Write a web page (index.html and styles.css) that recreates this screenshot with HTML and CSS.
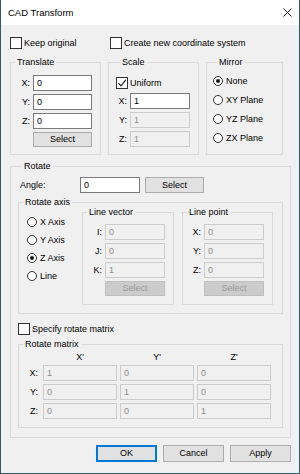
FILE: index.html
```html
<!DOCTYPE html>
<html>
<head>
<meta charset="utf-8">
<title>CAD Transform</title>
<link rel="stylesheet" href="styles.css">
</head>
<body>
<div class="window">
  <div class="titlebar">
    <span class="title">CAD Transform</span>
    <svg class="close" width="9" height="9" viewBox="0 0 9 9"><path d="M0.5 0.5L8.5 8.5M8.5 0.5L0.5 8.5" stroke="#1a1a1a" stroke-width="1" fill="none"/></svg>
  </div>
  <div class="dialog">
    <div class="checks">
      <label class="check keep"><span class="cb"></span>Keep original</label>
      <label class="check"><span class="cb"></span>Create new coordinate system</label>
    </div>

    <div class="toprow">
      <div class="group translate">
        <div class="gtitle">Translate</div>
        <div class="fields f59">
          <span class="flabel">X:</span><span class="input">0</span>
          <span class="flabel">Y:</span><span class="input">0</span>
          <span class="flabel">Z:</span><span class="input">0</span>
          <span></span><span class="btn">Select</span>
        </div>
      </div>

      <div class="group scale">
        <div class="gtitle">Scale</div>
        <label class="check uniform"><span class="cb"><svg width="10" height="10" viewBox="0 0 10 10"><path d="M1.5 5.2L4 7.8L8.8 1.8" stroke="#222" stroke-width="1.2" fill="none"/></svg></span>Uniform</label>
        <div class="fields f60 scalefields">
          <span class="flabel">X:</span><span class="input">1</span>
          <span class="flabel dl">Y:</span><span class="input dis">1</span>
          <span class="flabel dl">Z:</span><span class="input dis">1</span>
        </div>
      </div>

      <div class="group mirror">
        <div class="gtitle">Mirror</div>
        <div class="radios">
          <label class="radio"><span class="rb on"></span>None</label>
          <label class="radio"><span class="rb"></span>XY Plane</label>
          <label class="radio"><span class="rb"></span>YZ Plane</label>
          <label class="radio"><span class="rb"></span>ZX Plane</label>
        </div>
      </div>
    </div>

    <div class="group rotate">
      <div class="gtitle">Rotate</div>
      <div class="angle">
        <span class="anglelabel">Angle:</span>
        <span class="input angleinput">0</span>
        <span class="btn anglebtn">Select</span>
      </div>

      <div class="group axis">
        <div class="gtitle">Rotate axis</div>
        <div class="axisbody">
          <div class="radios axisradios">
            <label class="radio"><span class="rb"></span>X Axis</label>
            <label class="radio"><span class="rb"></span>Y Axis</label>
            <label class="radio"><span class="rb on"></span>Z Axis</label>
            <label class="radio"><span class="rb"></span>Line</label>
          </div>
          <div class="group sub linevector">
            <div class="gtitle">Line vector</div>
            <div class="fields f60 subfields">
              <span class="flabel">I:</span><span class="input dis">0</span>
              <span class="flabel">J:</span><span class="input dis">0</span>
              <span class="flabel">K:</span><span class="input dis">1</span>
              <span></span><span class="btn dis">Select</span>
            </div>
          </div>
          <div class="group sub linepoint">
            <div class="gtitle">Line point</div>
            <div class="fields f60 subfields">
              <span class="flabel">X:</span><span class="input dis">0</span>
              <span class="flabel">Y:</span><span class="input dis">0</span>
              <span class="flabel">Z:</span><span class="input dis">0</span>
              <span></span><span class="btn dis">Select</span>
            </div>
          </div>
        </div>
      </div>

      <label class="check specify"><span class="cb"></span>Specify rotate matrix</label>

      <div class="group matrix">
        <div class="gtitle">Rotate matrix</div>
        <div class="mgrid">
          <span></span><span class="mhead">X'</span><span class="mhead">Y'</span><span class="mhead">Z'</span>
          <span class="flabel">X:</span><span class="input dis">1</span><span class="input dis">0</span><span class="input dis">0</span>
          <span class="flabel">Y:</span><span class="input dis">0</span><span class="input dis">1</span><span class="input dis">0</span>
          <span class="flabel">Z:</span><span class="input dis">0</span><span class="input dis">0</span><span class="input dis">1</span>
        </div>
      </div>
    </div>

    <div class="buttons">
      <span class="btn dlg default">OK</span>
      <span class="btn dlg">Cancel</span>
      <span class="btn dlg">Apply</span>
    </div>
  </div>
</div>
</body>
</html>
```

FILE: styles.css
```css
* {
  box-sizing: border-box;
}

body {
  margin: 0;
  font-family: "Liberation Sans", Arial, sans-serif;
  font-size: 9px;
  color: #000;
  background: #f0f0f0;
}

.window {
  width: 300px;
  height: 474px;
  border: 1px solid #2f5a68;
  border-top: none;
  display: flex;
  flex-direction: column;
  background: #f0f0f0;
}

.titlebar {
  height: 25px;
  flex: none;
  background: #fff;
  display: flex;
  align-items: center;
  justify-content: space-between;
  padding: 0 7px 0 7px;
}

.title {
  font-size: 9.5px;
  color: #000;
}

.close {
  display: block;
}

.dialog {
  flex: 1;
  padding: 12px 8px 0 9px;
}

/* checkboxes */
.checks {
  display: flex;
  height: 12px;
}

.check {
  display: flex;
  align-items: center;
  gap: 2px;
  height: 12px;
  line-height: 12px;
  white-space: nowrap;
}

.keep {
  width: 100px;
}

.cb {
  width: 12px;
  height: 12px;
  flex: none;
  border: 1px solid #333;
  background: #fff;
  display: flex;
  align-items: center;
  justify-content: center;
}

.cb svg {
  display: block;
}

/* group boxes */
.group {
  border: 1px solid #d9d9d9;
}

.gtitle {
  margin: -6px 0 0 4px;
  padding: 0 2px;
  width: max-content;
  height: 11px;
  line-height: 11px;
  background: #f0f0f0;
}

.toprow {
  display: flex;
  gap: 7px;
  margin-top: 13px;
}

.translate {
  width: 91px;
  padding: 0 8px 7px 0;
}

.scale {
  width: 91px;
  padding: 0 8px 7px 7px;
}

.mirror {
  width: 77px;
  padding: 0 4px 0 6px;
}

.fields {
  display: grid;
  row-gap: 3px;
  margin-top: 7px;
}

.f59 {
  grid-template-columns: 1fr 59px;
}

.f60 {
  grid-template-columns: 1fr 60px;
}

.scalefields {
  margin-top: 4px;
}

.uniform {
  margin-top: 9px;
}

.flabel {
  text-align: right;
  padding-right: 3px;
  height: 16px;
  line-height: 16px;
}

.input {
  height: 16px;
  border: 1px solid #7a7a7a;
  background: #fff;
  padding-left: 3px;
  line-height: 14px;
  white-space: nowrap;
  overflow: hidden;
}

.input.dis {
  background: #f0f0f0;
  border-color: #cccccc;
  color: #8c8c8c;
}

.btn {
  height: 15px;
  border: 1px solid #adadad;
  background: #e1e1e1;
  text-align: center;
  line-height: 13px;
}

.btn.dis {
  background: #cccccc;
  border-color: #bfbfbf;
  color: #9a9a9a;
}

/* radios */
.radios {
  display: flex;
  flex-direction: column;
  gap: 9px;
  margin-top: 8px;
}

.radio {
  display: flex;
  align-items: center;
  gap: 3px;
  height: 10px;
  line-height: 10px;
  white-space: nowrap;
}

.rb {
  width: 10px;
  height: 10px;
  flex: none;
  border: 1px solid #333;
  border-radius: 50%;
  background: #fff;
  display: flex;
  align-items: center;
  justify-content: center;
}

.rb.on::after {
  content: "";
  width: 4px;
  height: 4px;
  border-radius: 50%;
  background: #1a1a1a;
}

/* rotate */
.rotate {
  margin-top: 11px;
  padding: 0 7px 9px 7px;
}

.angle {
  display: flex;
  align-items: center;
  margin-top: 5px;
  height: 16px;
}

.anglelabel {
  width: 62px;
  padding-left: 2px;
}

.angleinput {
  width: 60px;
}

.anglebtn {
  width: 59px;
  height: 16px;
  line-height: 14px;
  margin-left: 5px;
}

.axis {
  margin-top: 9px;
  padding: 0 0 8px 0;
}

.axisbody {
  display: flex;
  align-items: flex-start;
  margin-top: 4px;
}

.axisradios {
  width: 63px;
  padding-left: 8px;
  margin-top: 5px;
  gap: 8px;
}

.sub {
  padding: 0 8px 8px 0;
}

.linevector {
  width: 92px;
}

.linepoint {
  width: 91px;
  margin-left: 8px;
}

.subfields {
  margin-top: 6px;
}

.specify {
  margin-top: 9px;
}

.matrix {
  margin-top: 9px;
  padding: 0 11px 8px 0;
}

.mgrid {
  display: grid;
  grid-template-columns: 21px 74px 74px 74px;
  grid-template-rows: 12px 16px 16px 16px;
  column-gap: 3px;
  row-gap: 3px;
}

.mgrid .flabel {
  padding-right: 2px;
}

.mhead {
  text-align: center;
  line-height: 15px;
}

.buttons {
  display: flex;
  justify-content: flex-end;
  gap: 6px;
  margin-top: 7px;
}

.btn.dlg {
  width: 61px;
  height: 17px;
  line-height: 15px;
}

.btn.default {
  border-color: #0078d7;
  box-shadow: inset 0 0 0 1px #0078d7;
}
```
